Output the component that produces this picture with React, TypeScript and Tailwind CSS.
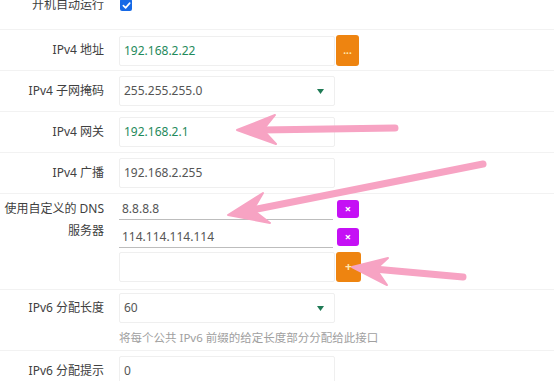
import React from 'react';

const labelCls = 'w-[104px] shrink-0 text-right text-[12px] text-[#404040] whitespace-nowrap';
const inputCls = 'w-[216px] h-[30px] border border-[#efefef] rounded-[2px] px-[4px] flex items-center text-[12px]';

const Row: React.FC<{ label: React.ReactNode; className?: string; children: React.ReactNode }> = ({ label, className = '', children }) => (
  <div className={`flex border-b border-[#f2f2f2] ${className}`}>
    <div className={`${labelCls} h-[30px] leading-[30px]`}>{label}</div>
    <div className="pl-[15px] flex flex-col">{children}</div>
  </div>
);

const SelectArrow = () => (
  <svg width="7" height="5" viewBox="0 0 7 5" className="ml-auto mr-[6px]">
    <path d="M0 0 L7 0 L3.5 5 Z" fill="#1f7a55" />
  </svg>
);

const SmallBtn: React.FC<{ color: string; children: React.ReactNode }> = ({ color, children }) => (
  <div className={`w-[22px] h-[18px] ml-[4px] rounded-[3px] ${color} text-white text-[11px] font-bold flex items-center justify-center`}>
    {children}
  </div>
);

export default function App() {
  return (
    <div className="relative w-[554px] h-[381px] overflow-hidden bg-white font-['Noto_Sans','Noto_Sans_CJK_SC',sans-serif]">
      <div className="-mt-[19px]">
        {/* boot */}
        <div className="flex items-center h-[49px] border-b border-[#f2f2f2]">
          <div className={labelCls}>开机自动运行</div>
          <div className="pl-[16px]">
            <div className="w-[12px] h-[12px] rounded-[2px] bg-[#1669e6] flex items-center justify-center">
              <svg width="9" height="9" viewBox="0 0 10 10">
                <path d="M1.5 5.2 L4 7.6 L8.6 2.4" stroke="white" strokeWidth="1.8" fill="none" strokeLinecap="round" strokeLinejoin="round" />
              </svg>
            </div>
          </div>
        </div>

        <Row label="IPv4 地址" className="h-[41px] pt-[5px]">
          <div className="flex items-center">
            <div className={`${inputCls} text-[#1f8a5c]`}>192.168.2.22</div>
            <div className="w-[23px] h-[31px] ml-[1px] rounded-[3px] bg-[#ee8410] text-[#ffe9b0] text-[10px] font-bold flex items-end justify-center pb-[8px]">...</div>
          </div>
        </Row>

        <Row label="IPv4 子网掩码" className="h-[41px] pt-[5px]">
          <div className={`${inputCls} text-[#555]`}>
            255.255.255.0
            <SelectArrow />
          </div>
        </Row>

        <Row label="IPv4 网关" className="h-[41px] pt-[5px]">
          <div className={`${inputCls} text-[#1f8a5c]`}>192.168.2.1</div>
        </Row>

        <Row label="IPv4 广播" className="h-[41px] pt-[5px]">
          <div className={`${inputCls} text-[#555]`}>192.168.2.255</div>
        </Row>

        {/* DNS */}
        <div className="flex h-[96px] pt-[4px] border-b border-[#f2f2f2]">
          <div className={`${labelCls} leading-[22px]`}>
            使用自定义的 DNS
            <br />
            服务器
          </div>
          <div className="pl-[15px] flex flex-col">
            <div className="flex items-center h-[22px]">
              <div className="w-[214px] h-[22px] border-b border-[#bdbdbd] px-[3px] flex items-center text-[12px] text-[#555]">8.8.8.8</div>
              <SmallBtn color="bg-[#c510f5]">×</SmallBtn>
            </div>
            <div className="flex items-center h-[22px] mt-[6px]">
              <div className="w-[214px] h-[22px] border-b border-[#bdbdbd] px-[3px] flex items-center text-[12px] text-[#555]">114.114.114.114</div>
              <SmallBtn color="bg-[#c510f5]">×</SmallBtn>
            </div>
            <div className="flex items-center mt-[4px]">
              <div className={`${inputCls} h-[30px]`} />
              <div className="w-[25px] h-[30px] ml-[1px] rounded-[3px] bg-[#ee8410] text-[#ffe9b0] text-[12px] font-bold flex items-center justify-center">+</div>
            </div>
          </div>
        </div>

        <Row label="IPv6 分配长度" className="h-[61px] pt-[3px]">
          <div className={`${inputCls} text-[#555]`}>
            60
            <SelectArrow />
          </div>
          <div className="mt-[7px] h-[16px] leading-[16px] text-[11.5px] text-[#a0a0a0] whitespace-nowrap">
            将每个公共 IPv6 前缀的给定长度部分分配给此接口
          </div>
        </Row>

        <Row label="IPv6 分配提示" className="h-[41px] pt-[5px]">
          <div className={`${inputCls} text-[#555]`}>0</div>
        </Row>
      </div>

      <svg className="absolute inset-0 pointer-events-none" width="554" height="381" viewBox="0 0 554 381">
        <g fill="#f7a3c3" stroke="#f7a3c3" strokeLinecap="round" strokeLinejoin="round">
          <line x1="395" y1="128" x2="262" y2="130" strokeWidth="7" />
          <path d="M237 130 L275 115 L263 130 L276 144 Z" strokeWidth="2" />

          <line x1="483" y1="164" x2="252" y2="210" strokeWidth="7" />
          <path d="M228 215 L263 193 L253 210 L270 223 Z" strokeWidth="2" />

          <line x1="463" y1="277" x2="374" y2="269" strokeWidth="7" />
          <path d="M352 267 L388 258 L376 269 L387 285 Z" strokeWidth="2" />
        </g>
      </svg>
    </div>
  );
}
